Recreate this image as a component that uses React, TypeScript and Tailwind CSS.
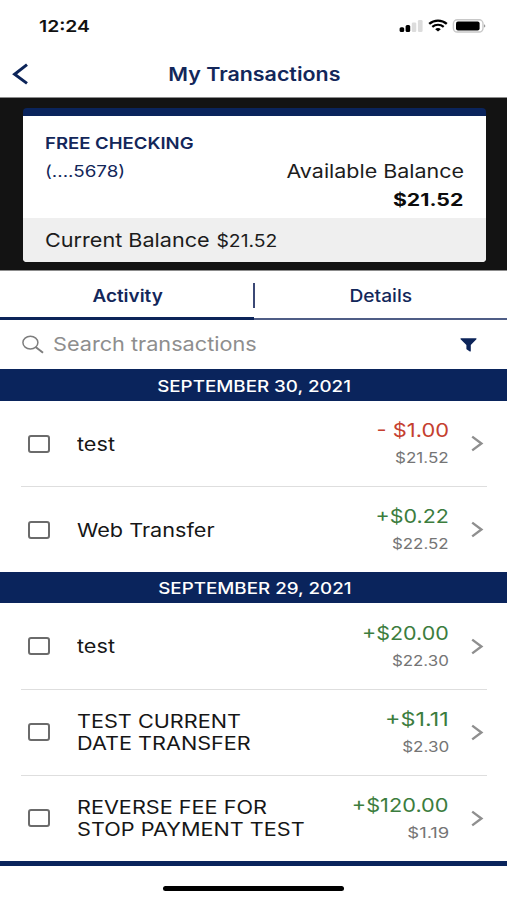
type Transaction = {
  lines: string[]
  amount: string
  balance: string
  amountScale: string
  balanceScale: string
}

type TransactionGroup = {
  date: string
  transactions: Transaction[]
}

const groups: TransactionGroup[] = [
  {
    date: "SEPTEMBER 30, 2021",
    transactions: [
      { lines: ["test"], amount: "- $1.00", balance: "$21.52", amountScale: "scale-x-[1.15]", balanceScale: "scale-x-[1.2]" },
      { lines: ["Web Transfer"], amount: "+$0.22", balance: "$22.52", amountScale: "scale-x-[1.13]", balanceScale: "scale-x-[1.19]" },
    ],
  },
  {
    date: "SEPTEMBER 29, 2021",
    transactions: [
      { lines: ["test"], amount: "+$20.00", balance: "$22.30", amountScale: "scale-x-[1.13]", balanceScale: "scale-x-[1.19]" },
      { lines: ["TEST CURRENT", "DATE TRANSFER"], amount: "+$1.11", balance: "$2.30", amountScale: "scale-x-[1.23]", balanceScale: "scale-x-[1.2]" },
      { lines: ["REVERSE FEE FOR", "STOP PAYMENT TEST"], amount: "+$120.00", balance: "$1.19", amountScale: "scale-x-[1.145]", balanceScale: "scale-x-[1.3]" },
    ],
  },
]

function StatusBar() {
  return (
    <div className="flex h-[50px] items-center justify-between pl-[39px] pr-[20px] pt-[2px] text-[#111]">
      <span className="origin-left scale-x-[1.17] text-[16.5px] font-semibold leading-5">12:24</span>
      <svg width="88" height="14" viewBox="0 0 88 14" fill="none">
        <rect x="0.6" y="8.3" width="4.6" height="4.7" rx="1.5" fill="#000" />
        <rect x="6.6" y="6" width="4.6" height="7" rx="1.5" fill="#000" />
        <rect x="12.8" y="3.5" width="4.5" height="9.5" rx="1.3" fill="#dcdcdc" />
        <rect x="18.9" y="1" width="4.7" height="12" rx="1.3" fill="#dcdcdc" />
        <path d="M30.2 4.9 C35.2 0.5 42.8 0.5 47.8 4.9" stroke="#000" strokeWidth="2.4" />
        <path d="M33.3 7.9 C36.6 5 41.4 5 44.7 7.9" stroke="#000" strokeWidth="2.2" />
        <path d="M36.2 10.2 C37.8 8.7 40.2 8.7 41.8 10.2 L39 12.6 Z" fill="#000" />
        <rect x="54.4" y="0.8" width="29.6" height="12.2" rx="3.8" stroke="#c8c8c8" strokeWidth="1.4" />
        <rect x="57" y="2.4" width="23.6" height="9" rx="2" fill="#000" />
        <path d="M85 5.2 C86.8 5.7 86.8 8 85 8.5 Z" fill="#9a9a9a" />
      </svg>
    </div>
  )
}

function Header() {
  return (
    <header className="relative flex h-12 items-center justify-center border-b border-[#8c8c8c] pt-px pl-[2px]">
      <svg className="absolute left-[12px] top-[12px]" width="18" height="24" viewBox="0 0 18 24" fill="none">
        <path d="M15 2.6 L2.6 12.2 L15 21.4" stroke="#0c2459" strokeWidth="3" />
      </svg>
      <h1 className="scale-x-[1.157] text-[18.5px] font-semibold leading-6">My Transactions</h1>
    </header>
  )
}

function AccountCard() {
  return (
    <section className="h-[173px] border-b border-[#8c8c8c] bg-[#131313] pl-[22.5px] pr-[21.5px] pt-[10px]">
      <div className="flex h-[154px] flex-col overflow-hidden rounded-[4px] border-t-8 border-[#0a245c] bg-white">
        <div className="flex h-[102px] justify-between px-[22px]">
          <div className="flex flex-col items-start pt-[13px]">
            <span className="origin-left scale-x-[1.158] text-[16px] font-semibold leading-7">FREE CHECKING</span>
            <span className="origin-left scale-x-[1.175] text-[16px] leading-7">(....5678)</span>
          </div>
          <div className="flex flex-col items-end pt-[41px] text-[#1c1c1c]">
            <span className="origin-right scale-x-[1.16] text-[18.5px] leading-7">Available Balance</span>
            <span className="origin-right scale-x-[1.25] pt-px text-[17px] font-bold leading-7 text-[#0c0c0c]">$21.52</span>
          </div>
        </div>
        <div className="flex flex-1 items-center bg-[#efefef] px-[22px] pt-[2px] text-[#1c1c1c]">
          <div className="flex origin-left scale-x-[1.137] items-baseline gap-[6px]">
            <span className="text-[19px] leading-6">Current Balance</span>
            <span className="text-[17px] leading-6">$21.52</span>
          </div>
        </div>
      </div>
    </section>
  )
}

function Tabs() {
  return (
    <nav className="relative flex h-[49px]">
      <button className="flex flex-1 items-center justify-center border-b-3 border-[#0c2459] pt-[3px] pl-px">
        <span className="scale-x-[1.11] text-[17px] font-semibold leading-6">Activity</span>
      </button>
      <button className="flex flex-1 items-center justify-center border-b-2 border-[#4f5d86] pt-[3px]">
        <span className="scale-x-[1.13] text-[17px] font-medium leading-6">Details</span>
      </button>
      <span className="absolute left-[253px] top-3 h-[25px] w-[2px] bg-[#3b4875]" />
    </nav>
  )
}

function SearchBar() {
  return (
    <div className="flex h-[49px] items-center pl-[22px] pr-[30px] text-[#8e8e8e]">
      <svg width="24" height="20" viewBox="0 0 24 20" fill="none" stroke="#7d7d7d">
        <ellipse cx="8.4" cy="7.6" rx="7.5" ry="6.4" strokeWidth="1.5" />
        <path d="M13.6 12 L21 17.8" strokeWidth="2" />
      </svg>
      <span className="ml-[6.5px] origin-left scale-x-[1.14] text-[19px] leading-6">Search transactions</span>
      <svg className="ml-auto" width="17" height="14" viewBox="0 0 17 14" fill="#0c2459">
        <path d="M0.9 0.2 H16.1 Q17 0.5 16.4 1.3 L10.8 6.9 V13 Q10.6 13.8 9.8 13.4 L6.9 11.6 Q6.4 11.3 6.4 10.9 V6.9 L0.6 1.3 Q0 0.5 0.9 0.2 Z" />
      </svg>
    </div>
  )
}

function TransactionRow({ transaction, divided }: { transaction: Transaction; divided: boolean }) {
  const { lines, amount, balance, amountScale, balanceScale } = transaction

  return (
    <div className="pl-[21px] pr-[20px]">
      <div className={`flex items-center pl-[7px] ${divided ? "h-[86px] border-t border-[#dedede]" : "h-[85px]"}`}>
        <span className="h-[18px] w-[22px] rounded-[3px] border-2 border-[#6b6b6b]" />
        <div className="ml-[27px] flex flex-col items-start text-[18.5px] leading-[22px] text-[#161616]">
          {lines.map((line) => (
            <span key={line} className="origin-left scale-x-[1.17] whitespace-nowrap">
              {line}
            </span>
          ))}
        </div>
        <div className="ml-auto flex flex-col items-end pr-[22px]">
          <span
            className={`origin-right pt-[2px] text-[19px] leading-[26px] ${amountScale} ${
              amount.startsWith("-") ? "text-[#c5402f]" : "text-[#3c7d3e]"
            }`}
          >
            {amount}
          </span>
          <span className={`origin-right text-[14.2px] leading-[27px] text-[#757575] ${balanceScale}`}>{balance}</span>
        </div>
        <svg className="mr-[3px]" width="13" height="17" viewBox="0 0 13 17" fill="none">
          <path d="M1.2 1.6 L10.4 8.5 L1.2 15.4" stroke="#8f8f8f" strokeWidth="2.4" />
        </svg>
      </div>
    </div>
  )
}

export default function App() {
  return (
    <div className="flex h-[900px] w-[507px] flex-col overflow-hidden bg-white font-['Inter','Liberation_Sans',sans-serif] text-[#13275a]">
      <StatusBar />
      <Header />
      <AccountCard />
      <Tabs />
      <SearchBar />
      {groups.map((group, index) => (
        <section key={group.date} className={index > 0 ? "pb-[0.5px]" : ""}>
          <div
            className={`flex items-center justify-center bg-[#0a245c] pl-[2px] pt-[3px] text-white ${
              index > 0 ? "mb-[0.5px] h-[31px]" : "h-8"
            }`}
          >
            <span className="scale-x-[1.21] text-[15.5px] font-medium leading-5">{group.date}</span>
          </div>
          {group.transactions.map((transaction, row) => (
            <TransactionRow key={row} transaction={transaction} divided={row > 0} />
          ))}
        </section>
      ))}
      <div className="h-[5px] shrink-0 bg-[#0a245c]" />
      <div className="flex justify-center pt-[20px]">
        <div className="h-[5px] w-[181px] rounded-full bg-black" />
      </div>
    </div>
  )
}
